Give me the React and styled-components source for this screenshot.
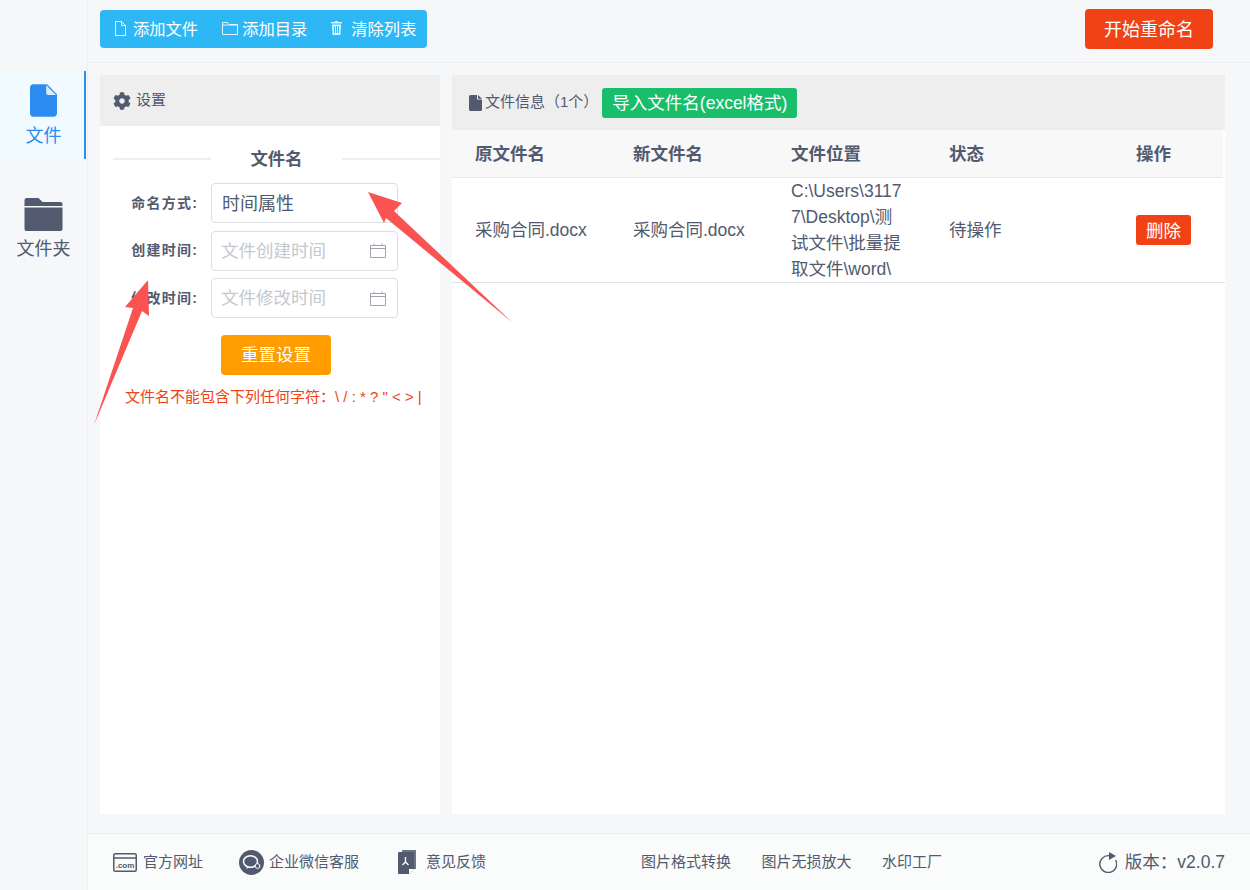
import React from 'react';
import styled, { createGlobalStyle } from 'styled-components';
import { FaCog } from 'react-icons/fa';

const GlobalStyle = createGlobalStyle`
  html, body { margin: 0; padding: 0; }
  body {
    font-family: "Liberation Sans", "Noto Sans CJK SC", sans-serif;
    color: #515a6e;
    background: #f6f7f9;
  }
`;

const Shell = styled.div`
  position: relative;
  display: flex;
  width: 1250px;
  height: 890px;
  overflow: hidden;
  background: #f6f7f9;
`;

const Sidebar = styled.aside`
  width: 87px;
  flex: none;
  padding-top: 71px;
  border-right: 1px solid #eceef1;
  display: flex;
  flex-direction: column;
  gap: 26px;
`;

const SideItem = styled.div`
  width: 81px;
  height: 87px;
  padding: 1px 0 0 3px;
  display: flex;
  flex-direction: column;
  align-items: center;
  justify-content: center;
  gap: 5px;
  font-size: 18px;
  line-height: 26px;
  color: ${(p) => (p.$active ? '#2d8cf0' : '#515a6e')};
  background: ${(p) => (p.$active ? '#f0faff' : 'transparent')};
  border-right: 2px solid ${(p) => (p.$active ? '#2d8cf0' : 'transparent')};
`;

const Main = styled.div`
  flex: 1;
  min-width: 0;
  display: flex;
  flex-direction: column;
`;

const TopBar = styled.header`
  height: 53px;
  flex: none;
  border-bottom: 1px solid #eceef1;
  padding: 9px 37px 0 12px;
  display: flex;
  justify-content: space-between;
  align-items: flex-start;
`;

const ToolGroup = styled.div`
  margin-top: 1px;
  height: 38px;
  width: 327px;
  box-sizing: border-box;
  padding: 0 0 2px 14px;
  display: flex;
  align-items: center;
  gap: 24px;
  background: #2db7f5;
  border-radius: 4px;
`;

const ToolButton = styled.div`
  display: flex;
  align-items: center;
  gap: ${(p) => p.$gap}px;
  color: #fff;
  font-size: 16.3px;
  white-space: nowrap;
`;

const StartButton = styled.div`
  width: 128px;
  height: 40px;
  box-sizing: border-box;
  padding-bottom: 2px;
  display: flex;
  align-items: center;
  justify-content: center;
  background: #f04215;
  color: #fff;
  font-size: 18px;
  border-radius: 4px;
`;

const Content = styled.div`
  flex: 1;
  min-height: 0;
  padding: 12px 25px 19px 12px;
  display: flex;
  gap: 12px;
`;

const LeftPanel = styled.section`
  width: 340px;
  flex: none;
  background: #fff;
`;

const RightPanel = styled.section`
  flex: 1;
  background: #fff;
`;

const PanelHead = styled.div`
  height: ${(p) => p.$h}px;
  background: #eee;
  display: flex;
  align-items: center;
  padding-left: ${(p) => p.$pad}px;
`;

const HeadText = styled.span`
  margin-left: ${(p) => p.$ml}px;
  padding-bottom: 4px;
  font-size: 15px;
  white-space: nowrap;
`;

const TitleRow = styled.div`
  display: flex;
  align-items: center;
  margin: 22px 0 13px 13px;
  height: 22px;
`;

const Rule = styled.span`
  flex: 1;
  height: 2px;
  background: #eeeeee;
`;

const Title = styled.span`
  width: 131px;
  padding-bottom: 4px;
  text-align: center;
  font-size: 17.3px;
  font-weight: 700;
`;

const Form = styled.div`
  display: flex;
  flex-direction: column;
  gap: 7.5px;
`;

const FormRow = styled.div`
  display: flex;
  align-items: center;
  gap: 13px;
`;

const Label = styled.label`
  width: 98px;
  padding-bottom: 3px;
  text-align: right;
  font-size: 14px;
  letter-spacing: 1.2px;
  font-weight: 700;
  white-space: nowrap;
`;

const Field = styled.div`
  width: 187px;
  height: 40px;
  box-sizing: border-box;
  padding: 0 11px 0 ${(p) => (p.$placeholder ? 9 : 10)}px;
  border: 1px solid #dcdee2;
  border-radius: 4px;
  display: flex;
  align-items: center;
  justify-content: space-between;
  font-size: ${(p) => (p.$placeholder ? '17.5px' : '18px')};
  color: ${(p) => (p.$placeholder ? '#c5c8ce' : '#515a6e')};
`;

const FieldText = styled.span`
  padding-bottom: 3px;
  white-space: nowrap;
`;

const ResetButton = styled.div`
  width: 110px;
  height: 40px;
  box-sizing: border-box;
  padding-bottom: 3px;
  margin: 17px 0 0 121px;
  display: flex;
  align-items: center;
  justify-content: center;
  background: #ff9d00;
  color: #fff;
  font-size: 17.5px;
  border-radius: 4px;
`;

const Warning = styled.p`
  margin: 12px 0 0 25px;
  font-size: 15px;
  line-height: 20px;
  color: #f04215;
  white-space: nowrap;
`;

const ImportButton = styled.div`
  height: 30px;
  width: 195px;
  box-sizing: border-box;
  padding-bottom: 2px;
  margin-left: 4px;
  display: flex;
  align-items: center;
  justify-content: center;
  background: #19be6b;
  color: #fff;
  font-size: 17.5px;
  border-radius: 3px;
  white-space: nowrap;
`;

const Row = styled.div`
  display: grid;
  grid-template-columns: 158px 158px 158px 187px 1fr;
  align-items: center;
  box-sizing: border-box;
  padding-left: 23px;
  width: ${(p) => (p.$head ? '771px' : '100%')};
  height: ${(p) => (p.$head ? 48 : 105)}px;
  background: ${(p) => (p.$head ? '#f8f8f9' : '#fff')};
  border-bottom: 1px solid ${(p) => (p.$head ? '#e8eaec' : '#dfe1e5')};
  font-size: 17.5px;
  font-weight: ${(p) => (p.$head ? 700 : 400)};

  & > span { padding-bottom: ${(p) => (p.$head ? 2 : 4)}px; }
`;

const PathCell = styled.div`
  width: 112px;
  line-height: 26px;
  word-break: break-all;
`;

const DeleteButton = styled.div`
  width: 55px;
  height: 30px;
  box-sizing: border-box;
  padding-bottom: 2px;
  display: flex;
  align-items: center;
  justify-content: center;
  background: #f04215;
  color: #fff;
  font-size: 17.5px;
  border-radius: 3px;
`;

const Footer = styled.footer`
  height: 56px;
  flex: none;
  border-top: 1px solid #eceef1;
  background: #fafbfb;
  display: grid;
  grid-template-columns: 528px 1fr auto;
  align-items: center;
  padding: 0 25px;
`;

const FootGroup = styled.div`
  display: flex;
  align-items: center;
  gap: ${(p) => p.$gap}px;
`;

const FootLink = styled.div`
  display: flex;
  align-items: center;
  gap: ${(p) => p.$gap || 6}px;
  font-size: ${(p) => p.$size || 15}px;
  white-space: nowrap;
`;

const FootText = styled.span`
  padding-bottom: 4px;
`;

const FileBlue = () => (
  <svg width="27" height="35" viewBox="0 0 30 36">
    <path d="M4 0h15l11 11v21a4 4 0 0 1-4 4H4a4 4 0 0 1-4-4V4a4 4 0 0 1 4-4z" fill="#2d8cf0" />
    <path d="M18 1l11 11h-8a3 3 0 0 1-3-3z" fill="#dcecfc" />
  </svg>
);

const FolderDark = () => (
  <svg width="39" height="33" viewBox="0 0 38 33">
    <path d="M2 0h12l4 4h18a2 2 0 0 1 2 2v2H0V2a2 2 0 0 1 2-2z" fill="#515a6e" />
    <path d="M0 9.500h38V31a2 2 0 0 1-2 2H2a2 2 0 0 1-2-2z" fill="#515a6e" />
  </svg>
);

const FileLine = () => (
  <svg width="13" height="15" viewBox="0 0 13 15" fill="none" stroke="#fff" strokeOpacity=".85">
    <path d="M1.500.5h6l4 4v10h-10z" />
    <path d="M7.500.5v4h4" />
  </svg>
);

const FolderLine = () => (
  <svg width="16" height="15" viewBox="0 0 16 15" fill="none" stroke="#fff" strokeOpacity=".85">
    <path d="M.5 13.500v-12h5l1.500 2h8.500v10z" />
    <path d="M.5 4h15" />
  </svg>
);

const Trash = () => (
  <svg width="11" height="14" viewBox="0 0 11 14" fill="#fff" fillOpacity=".85">
    <path d="M4 0h3v1h4v1.500H0V1h4z" />
    <path d="M1 3.500h9L9.400 14H1.600zM3 5v7h1V5zm2 0v7h1V5zm2 0v7h1V5z" />
  </svg>
);

const FileSmall = () => (
  <svg width="13" height="16" viewBox="0 0 13 16" fill="#515a6e">
    <path d="M1.500 0H8v4.500h5V14.500a1.500 1.500 0 0 1-1.500 1.500h-10A1.500 1.500 0 0 1 0 14.500v-13A1.500 1.500 0 0 1 1.500 0z" />
    <path d="M9 0l4 3.700H9z" />
  </svg>
);

const CalendarIcon = () => (
  <svg width="16" height="15" viewBox="0 0 16 15" fill="none" stroke="#9ea3ae">
    <path d="M.5 2.500h15v12H.5zM.5 5.500h15M4 .5v2M12 .5v2" />
  </svg>
);

const ComIcon = () => (
  <svg width="24" height="19" viewBox="0 0 24 19" fill="none" stroke="#515a6e" strokeWidth="1.500">
    <rect x=".75" y=".75" width="22.500" height="17.500" rx="1.500" />
    <path d="M.75 5h22.500" />
    <text x="12" y="15" textAnchor="middle" fontSize="8" fontWeight="700" fill="#515a6e" stroke="none" fontFamily="Liberation Sans">.com</text>
  </svg>
);

const WeChatIcon = () => (
  <svg width="25" height="25" viewBox="0 0 25 25">
    <circle cx="12.500" cy="12.500" r="12.500" fill="#515a6e" />
    <ellipse cx="11.500" cy="11.500" rx="7" ry="5.800" fill="none" stroke="#fff" strokeWidth="1.500" />
    <path d="M8 16l-.5 3 3-2" fill="#fff" />
    <circle cx="18.500" cy="16" r="2.400" fill="#515a6e" stroke="#fff" strokeWidth="1" />
  </svg>
);

const FeedbackIcon = () => (
  <svg width="22" height="24" viewBox="-3 0 22 24">
    <path d="M4 0h14v19h-2V2H4z" fill="#6d7485" />
    <path d="M1 2h15v17l-5 5H1a1 1 0 0 1-1-1V3a1 1 0 0 1 1-1z" fill="#515a6e" />
    <path d="M11 24v-5h5z" fill="#fff" />
    <path d="M7.500 7v5M7.500 12l-3 3M7.500 12l3 3" stroke="#fff" strokeWidth="1.300" fill="none" />
  </svg>
);

const RefreshIcon = () => (
  <svg width="19" height="22" viewBox="0 0 19 22" fill="none">
    <path d="M11 4.700A8.400 8.400 0 1 0 17.600 9" stroke="#515a6e" strokeWidth="1.400" />
    <path d="M11 1l7 4-7 4z" fill="#515a6e" />
  </svg>
);

const Arrows = styled.svg`
  position: absolute;
  inset: 0;
  pointer-events: none;
`;

export default function App() {
  return (
    <>
      <GlobalStyle />
      <Shell>
        <Sidebar>
          <SideItem $active>
            <FileBlue />
            文件
          </SideItem>
          <SideItem>
            <FolderDark />
            文件夹
          </SideItem>
        </Sidebar>
        <Main>
          <TopBar>
            <ToolGroup>
              <ToolButton $gap={6}><FileLine />添加文件</ToolButton>
              <ToolButton $gap={4}><FolderLine />添加目录</ToolButton>
              <ToolButton $gap={9}><Trash />清除列表</ToolButton>
            </ToolGroup>
            <StartButton>开始重命名</StartButton>
          </TopBar>
          <Content>
            <LeftPanel>
              <PanelHead $h={51} $pad={13}>
                <FaCog size={18} color="#515a6e" />
                <HeadText $ml={5}>设置</HeadText>
              </PanelHead>
              <TitleRow>
                <Rule />
                <Title>文件名</Title>
                <Rule />
              </TitleRow>
              <Form>
                <FormRow>
                  <Label>命名方式:</Label>
                  <Field><FieldText>时间属性</FieldText></Field>
                </FormRow>
                <FormRow>
                  <Label>创建时间:</Label>
                  <Field $placeholder><FieldText>文件创建时间</FieldText><CalendarIcon /></Field>
                </FormRow>
                <FormRow>
                  <Label>修改时间:</Label>
                  <Field $placeholder><FieldText>文件修改时间</FieldText><CalendarIcon /></Field>
                </FormRow>
              </Form>
              <ResetButton>重置设置</ResetButton>
              <Warning>文件名不能包含下列任何字符：\ / : * ? " &lt; &gt; |</Warning>
            </LeftPanel>
            <RightPanel>
              <PanelHead $h={55} $pad={17}>
                <FileSmall />
                <HeadText $ml={3}>文件信息（1个）</HeadText>
                <ImportButton>导入文件名(excel格式)</ImportButton>
              </PanelHead>
              <Row $head>
                <span>原文件名</span>
                <span>新文件名</span>
                <span>文件位置</span>
                <span>状态</span>
                <span>操作</span>
              </Row>
              <Row>
                <span>采购合同.docx</span>
                <span>采购合同.docx</span>
                <PathCell>C:\Users\31177\Desktop\测试文件\批量提取文件\word\</PathCell>
                <span>待操作</span>
                <DeleteButton>删除</DeleteButton>
              </Row>
            </RightPanel>
          </Content>
          <Footer>
            <FootGroup $gap={36}>
              <FootLink $gap={6}><ComIcon /><FootText>官方网址</FootText></FootLink>
              <FootLink $gap={5}><WeChatIcon /><FootText>企业微信客服</FootText></FootLink>
              <FootLink $gap={9}><FeedbackIcon /><FootText>意见反馈</FootText></FootLink>
            </FootGroup>
            <FootGroup $gap={30.5}>
              <FootLink><FootText>图片格式转换</FootText></FootLink>
              <FootLink><FootText>图片无损放大</FootText></FootLink>
              <FootLink><FootText>水印工厂</FootText></FootLink>
            </FootGroup>
            <FootLink $size={17.5} $gap={8}><RefreshIcon /><FootText>版本：v2.0.7</FootText></FootLink>
          </Footer>
        </Main>
        <Arrows width="1250" height="890" viewBox="0 0 1250 890">
          <path d="M368 192L402 203L394 211L513 323L386 218L384 223Z" fill="#fb5252" />
          <path d="M148 280L149 316L142 311L94 425L133 308L125 307Z" fill="#fb5252" />
        </Arrows>
      </Shell>
    </>
  );
}
